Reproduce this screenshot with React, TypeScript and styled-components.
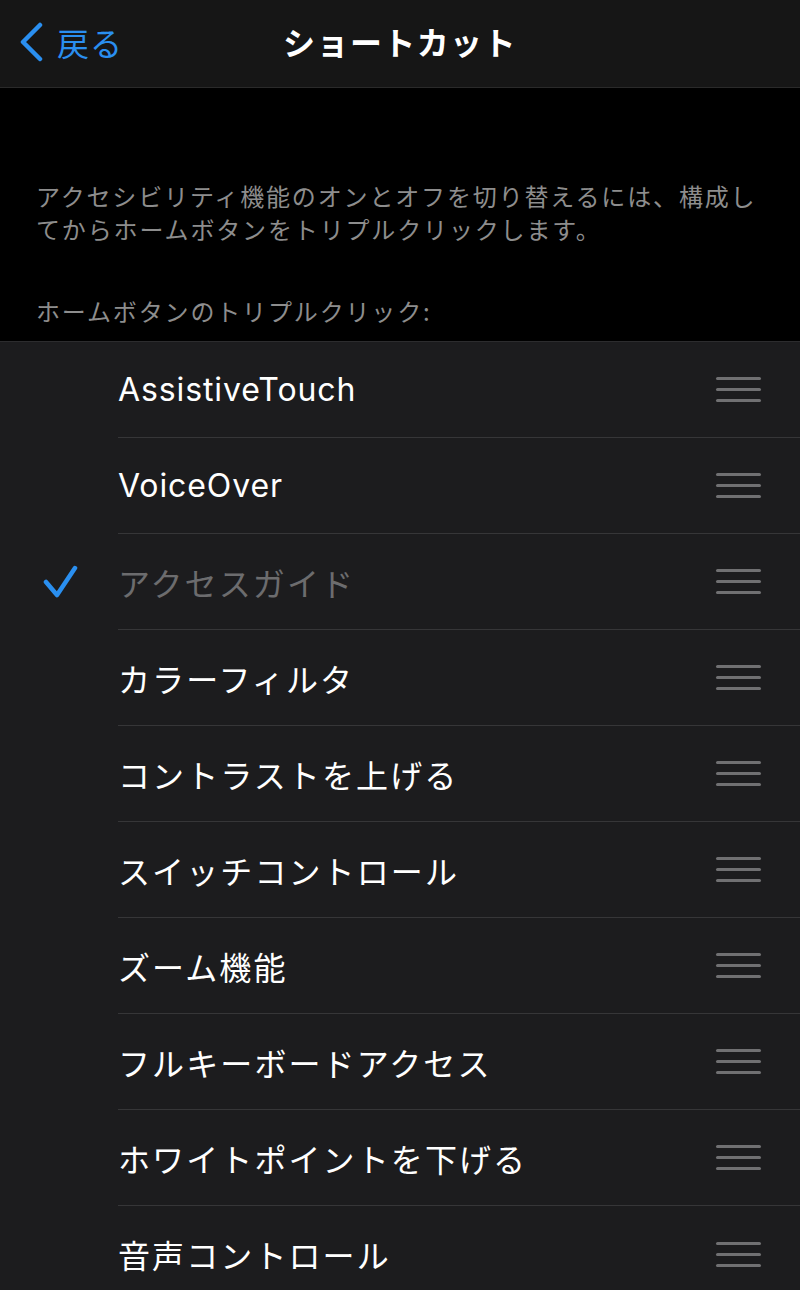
import styled, { createGlobalStyle } from "styled-components";

const GlobalStyle = createGlobalStyle`
  html, body {
    margin: 0;
    padding: 0;
    background: #000000;
  }
  body {
    font-family: "Noto Sans CJK JP", "Noto Sans", sans-serif;
    -webkit-font-smoothing: antialiased;
  }
`;

const Screen = styled.div`
  width: 800px;
  height: 1290px;
  overflow: hidden;
  background: #1c1c1e;
  display: flex;
  flex-direction: column;
`;

const NavBar = styled.div`
  height: 88px;
  flex-shrink: 0;
  background: #161616;
  border-bottom: 1px solid #2a2a2a;
  box-sizing: border-box;
  display: grid;
  grid-template-columns: 1fr auto 1fr;
  align-items: center;
`;

const BackButton = styled.div`
  display: flex;
  align-items: center;
  gap: 13px;
  padding-left: 18px;
  color: #2a8ff0;
  font-size: 32px;
  letter-spacing: 1px;
  line-height: 1;
  padding-bottom: 4px;
`;

const Title = styled.div`
  color: #ffffff;
  font-size: 32px;
  font-weight: 700;
  letter-spacing: 1.4px;
  padding-bottom: 6px;
`;

const Header = styled.div`
  background: #000000;
  height: 254px;
  flex-shrink: 0;
  box-sizing: border-box;
  padding: 91px 24px 0 36px;
  color: #8d8d8d;
  font-size: 24px;
  letter-spacing: 1.85px;
  line-height: 33px;
  border-bottom: 1px solid #2c2c2e;
`;

const Caption = styled.div`
  margin-top: 49px;
`;

const List = styled.div`
  display: flex;
  flex-direction: column;
`;

const Row = styled.div`
  height: 96px;
  flex-shrink: 0;
  display: flex;
  align-items: stretch;
`;

const CheckCell = styled.div`
  width: 118px;
  flex-shrink: 0;
  display: flex;
  align-items: center;
  padding-left: 42px;
  box-sizing: border-box;
`;

const RowBody = styled.div<{ $last?: boolean }>`
  flex: 1;
  display: flex;
  align-items: center;
  justify-content: space-between;
  padding-right: 39px;
  border-bottom: ${(p) => (p.$last ? "none" : "1px solid #363638")};
`;

const Label = styled.span<{ $dim?: boolean; $latin?: boolean }>`
  color: ${(p) => (p.$dim ? "#6c6c6e" : "#ffffff")};
  font-size: 32px;
  letter-spacing: ${(p) => (p.$latin ? "0.9px" : "2.1px")};
  font-family: ${(p) =>
    p.$latin
      ? '"Inter", "Noto Sans", sans-serif'
      : '"Noto Sans CJK JP", "Noto Sans", sans-serif'};
`;

const Handle = styled.div`
  width: 45px;
  display: flex;
  flex-direction: column;
  gap: 8px;
  & span {
    height: 3px;
    border-radius: 2px;
    background: #707072;
  }
`;

const items = [
  { label: "AssistiveTouch", latin: true },
  { label: "VoiceOver", latin: true },
  { label: "アクセスガイド", checked: true },
  { label: "カラーフィルタ" },
  { label: "コントラストを上げる" },
  { label: "スイッチコントロール" },
  { label: "ズーム機能" },
  { label: "フルキーボードアクセス" },
  { label: "ホワイトポイントを下げる" },
  { label: "音声コントロール" },
];

const App = () => {
  return (
    <Screen>
      <GlobalStyle />
      <NavBar>
        <BackButton>
          <svg width="26" height="40" viewBox="0 0 26 40">
            <path
              d="M22 3 L5 20 L22 37"
              fill="none"
              stroke="#2a8ff0"
              strokeWidth="4.5"
              strokeLinecap="round"
              strokeLinejoin="round"
            />
          </svg>
          <span>戻る</span>
        </BackButton>
        <Title>ショートカット</Title>
        <div />
      </NavBar>
      <Header>
        <div>
          アクセシビリティ機能のオンとオフを切り替えるには、構成してからホームボタンをトリプルクリックします。
        </div>
        <Caption>ホームボタンのトリプルクリック:</Caption>
      </Header>
      <List>
        {items.map((item, i) => (
          <Row key={item.label}>
            <CheckCell>
              {item.checked && (
                <svg width="36" height="36" viewBox="0 0 36 36">
                  <path
                    d="M4 18 L15 31 L33 4"
                    fill="none"
                    stroke="#2a8ff0"
                    strokeWidth="4.5"
                    strokeLinecap="round"
                    strokeLinejoin="round"
                  />
                </svg>
              )}
            </CheckCell>
            <RowBody $last={i === items.length - 1}>
              <Label $dim={item.checked} $latin={item.latin}>
                {item.label}
              </Label>
              <Handle>
                <span />
                <span />
                <span />
              </Handle>
            </RowBody>
          </Row>
        ))}
      </List>
    </Screen>
  );
};

export default App;
